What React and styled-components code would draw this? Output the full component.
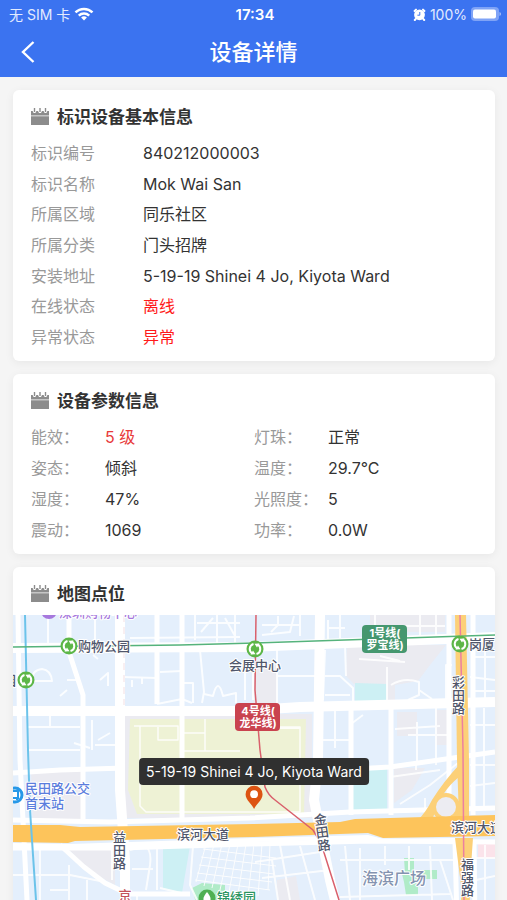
import styled, { createGlobalStyle } from "styled-components"

const GlobalStyle = createGlobalStyle`
  * {
    box-sizing: border-box;
  }

  body {
    margin: 0;
    background: #f5f5f5;
    color: #333;
    font-family: Inter, "Noto Sans CJK SC", sans-serif;
    font-size: 16px;
  }
`

const Page = styled.div`
  display: flex;
  flex-direction: column;
  height: 100vh;
`

const Header = styled.header`
  flex: none;
  background: #3b73f0;
  color: #fff;
`

const StatusBar = styled.div`
  display: grid;
  grid-template-columns: 1fr auto 1fr;
  align-items: center;
  height: 28px;
  padding: 0 6px 0 9px;
  font-size: 14px;
`

const StatusGroup = styled.div`
  display: flex;
  align-items: center;
  justify-content: ${(props) => props.$end ? "flex-end" : "flex-start"};
  gap: 4px;
  color: #e3ebff;
`

const Time = styled.span`
  font-size: 15px;
  font-weight: 600;
`

const NavBar = styled.div`
  display: grid;
  grid-template-columns: 56px 1fr 56px;
  align-items: center;
  height: 49px;
  padding-bottom: 2px;
`

const BackButton = styled.button`
  display: flex;
  align-items: center;
  justify-content: center;
  height: 44px;
  padding: 0;
  border: 0;
  background: none;
  color: #fff;
  cursor: pointer;
`

const PageTitle = styled.h1`
  margin: 0;
  font-size: 22px;
  line-height: 32px;
  font-weight: 500;
  text-align: center;
`

const Content = styled.main`
  flex: 1;
  min-height: 0;
  overflow-y: auto;
  scrollbar-width: none;
  display: flex;
  flex-direction: column;
  gap: 13px;
  padding: 13px 12px 13px 13px;
`

const Card = styled.section`
  flex: none;
  overflow: hidden;
  border-radius: 6px;
  background: #fff;
  box-shadow: 0 2px 10px rgba(0,0,0,0.06);
`

const CardTitle = styled.h2`
  display: flex;
  align-items: center;
  gap: 8px;
  height: 48px;
  margin: 0;
  padding: 12px 18px 6px;
  font-size: 17px;
  line-height: 30px;
  font-weight: 700;
`

const List = styled.dl`
  display: grid;
  grid-template-columns: repeat(${(props) => props.$columns}, 1fr);
  grid-auto-rows: 1fr;
  min-height: ${(props) => props.$height}px;
  margin: 0 18px 9px;
`

const Item = styled.div`
  display: flex;
  align-items: center;
  line-height: 24px;
`

const Label = styled.dt`
  flex: none;
  width: ${(props) => props.$width}px;
  color: #999;
`

const Value = styled.dd`
  margin: 0;
  color: ${(props) => props.$color || "#333"};
`

const MapBox = styled.div`
  position: relative;
  height: 388px;
  overflow: hidden;
`

const MapSvg = styled.svg`
  display: block;
  width: 100%;
  height: 100%;
`

const Marker = styled.div`
  position: absolute;
  left: 50%;
  bottom: 50%;
  transform: translateX(-50%);
  display: flex;
  flex-direction: column;
  align-items: center;
`

const Tooltip = styled.div`
  padding: 0 7px;
  border-radius: 4px;
  background: #303030;
  color: #fff;
  font-size: 14px;
  line-height: 27px;
  white-space: nowrap;
`

const MapText = styled.text`
  font-size: ${(props) => props.$size || 13}px;
  font-weight: ${(props) => props.$weight || 500};
  fill: ${(props) => props.$color || "#50566b"};
  stroke: ${(props) => props.$plain ? "none" : "#fff"};
  stroke-width: 2px;
  stroke-linejoin: round;
  paint-order: stroke;
  text-anchor: ${(props) => props.$anchor || "start"};
  writing-mode: ${(props) => props.$vertical ? "vertical-rl" : "horizontal-tb"};
`

const basicInfo = [
  {label:"标识编号", value:"840212000003"},
  {label:"标识名称", value:"Mok Wai San"},
  {label:"所属区域", value:"同乐社区"},
  {label:"所属分类", value:"门头招牌"},
  {label:"安装地址", value:"5-19-19 Shinei 4 Jo, Kiyota Ward"},
  {label:"在线状态", value:"离线", color:"#ff1a1a"},
  {label:"异常状态", value:"异常", color:"#ff1a1a"},
]

const params = [
  {label:"能效：", value:"5 级", color:"#e83a3a"},
  {label:"灯珠：", value:"正常"},
  {label:"姿态：", value:"倾斜"},
  {label:"温度：", value:"29.7°C"},
  {label:"湿度：", value:"47%"},
  {label:"光照度：", value:"5"},
  {label:"震动：", value:"1069"},
  {label:"功率：", value:"0.0W"},
]

const mainRoads = [
  "M13 648 L250 647 L495 637",
  "M13 711 L240 711 L300 707 L495 702",
  "M120 615 V790 L125 860 V1003",
  "M320 615 L318 760 L314 800 L330 880 L360 1003",
]

const sideRoads = [
  "M18 615 L20 760 L27 900 L34 1003",
  "M69 615 V652 L83 695 V822",
  "M182 615 V820",
  "M157 615 V704",
  "M351 708 V815",
  "M391 706 V815",
  "M13 773 L60 770 L125 768",
  "M13 820 L110 822 L250 818 L350 812 L495 808",
  "M13 848 L120 848 L250 844 L370 841 L495 842",
  "M60 845 L84 867 L105 883 L128 894 H190",
  "M318 771 L390 767 L495 752",
  "M449 615 V815",
  "M473 615 V815",
  "M455 842 L459 1003",
  "M474 842 L476 1003",
]

const minorRoads = [
  "M48 615 V647", "M95 615 V640", "M130 638 L240 637", "M195 615 V640", "M217 615 V643", "M235 615 V643",
  "M197 623 H240", "M201 632 L213 618 M225 618 L235 636",
  "M32 680 Q32 670 42 669 Q51 670 52 681 H30", "M67 680 L77 680", "M67 690 L60 696",
  "M93 655 L98 659", "M100 680 L108 673 V686", "M122 677 L157 678", "M132 680 V687 M142 678 V684",
  "M160 672 L182 671", "M182 683 H193 V703", "M200 650 L204 692 L202 703", "M204 694 L213 696 Q218 676 223 696 L236 693 V703",
  "M245 660 V700", "M157 704 L182 699 L192 703",
  "M262 625 H300 M271 632 L278 625 V616 M294 616 L290 632 L262 635", "M300 615 V636",
  "M328 620 V645 M340 615 V638 M328 628 H345", "M375 615 V632 M420 615 V640 M402 626 H445 M436 615 V640",
  "M277 645 V703", "M278 676 H340 L353 688 V703", "M325 650 L323 700 M325 695 H350", "M345 645 L346 676",
  "M359 659 L405 662 M380 656 L400 661", "M387 667 V704 M391 685 Q404 677 419 682 V695 L408 700 M419 690 L432 699",
  "M452 665 H446 V700", "M471 657 H495 M470 677 L495 680 M471 691 H495 M485 640 V700",
  "M27 750 H80 M95 745 H118 M92 720 V750 M98 740 L110 733 M74 743 L90 748",
  "M27 727 H80 M50 712 V727", "M253 673 V700",
  "M278 718 V728 H300 M335 710 V748 M320 740 H350 M363 715 L351 724 M395 729 L440 726 M417 722 V765 M436 708 V765 M408 735 H449",
  "M400 804 L430 785 L458 763 M390 777 L440 770 M416 770 V765 M425 798 V815",
  "M470 725 H495 M484 708 V808 M470 765 H495 M470 786 L495 783",
  "M40 848 V1003 M13 875 H70 L100 881 M69 865 V1003 M50 890 H69 M87 880 V900 M112 848 V880",
  "M130 850 L145 846 Q152 850 150 865 L146 890 M157 848 V890 M132 869 H153 M137 895 V920 M160 888 L190 895",
  "M193 846 L190 885 L197 900",
  "M280 845 L290 900 M262 878 L330 870 M255 862 L320 852 M272 860 L278 900 M300 846 L315 900 M345 846 L350 900",
  "M360 848 V905 M340 860 H460 M385 846 V865 M409 846 V870 M430 846 L432 900 M340 897 L450 894 M440 860 L453 900",
  "M476 858 H495 M476 880 L495 876 M485 845 V900",
]

const gridStreets = [
  "M206 844 L196 882", "M214 844 L204 886", "M222 844 L212 888", "M230 844 L220 890", "M238 844 L229 892",
  "M246 844 L238 894", "M254 844 L248 896", "M262 844 L258 896", "M270 844 L268 890",
  "M203 849 L276 858", "M201 857 L276 866", "M199 865 L274 874", "M197 873 L272 882", "M195 880 L270 890",
]

const WifiIcon = () => (
  <svg width="20" height="14" viewBox="0 0 20 14" fill="none" stroke="#fff" strokeWidth="2.5">
    <path d="M1.5 5.4C6.2 .8 13.8 .8 18.5 5.4" />
    <path d="M4.8 8.6c3-2.8 7.4-2.8 10.4 0" />
    <path d="M10 13.4 7.1 10.5q2.9-2.3 5.8 0z" fill="#fff" stroke="none" />
  </svg>
)

const AlarmIcon = () => (
  <svg width="13" height="13" viewBox="0 0 13 13">
    <circle cx="6.5" cy="6.8" r="5.4" fill="#fff" />
    <path d="M1.6 3 3 1.6M11.4 3 10 1.6M2.8 10.8 1.8 12M10.2 10.8l1 1.2" stroke="#fff" strokeWidth="2" strokeLinecap="round" />
    <path d="M6.8 4v3.2H4.4" fill="none" stroke="#3b73f0" strokeWidth="1" />
  </svg>
)

const BatteryIcon = () => (
  <svg width="30" height="14" viewBox="0 0 30 14">
    <rect x="0" y="0" width="28" height="14" rx="4" fill="#7fa3f6" />
    <rect x="2" y="2.5" width="23" height="9" rx="2" fill="#fff" />
    <path d="M28.5 5v4q1.5-.5 1.5-2t-1.5-2z" fill="#a9c1fa" />
  </svg>
)

const CalendarIcon = () => (
  <svg width="18" height="20" viewBox="0 0 18 20" fill="#8c8c8c">
    <path d="M0 4h1.6l1 2h1.8l1-2H7l1 2h2l1-2h1.600l1 2h1.800l1-2H18v4.500H0z" />
    <path d="M2.800 1h1.400v4H2.800zM8.300 1h1.400v4H8.300zM13.800 1h1.400v4h-1.400z" />
    <path d="M0 9.300h18V18H0z" />
  </svg>
)

const PinIcon = () => (
  <svg width="18" height="24" viewBox="0 0 18 24">
    <path d="M9 24C7.500 19.500.5 15.500.5 9.200a8.500 8.500 0 0 1 17 0C17.500 15.500 10.500 19.500 9 24z" fill="#dd5412" />
    <circle cx="9" cy="9.200" r="3.900" fill="#fff" />
  </svg>
)

const Station = ({x, y}) => (
  <g transform={`translate(${x} ${y})`}>
    <circle r="8.500" fill="#5cb647" />
    <g fill="none" stroke="#fff" strokeWidth="2">
      <path d="M-1.500 -5A5.200 5.200 0 0 0 -2.500 4.600" />
      <path d="M1.500 5A5.200 5.200 0 0 0 2.500 -4.600" />
    </g>
    <path d="M-4.500 5.500L.5 5.200-2 1.500zM4.500-5.500L-.5-5.200 2-1.500z" fill="#fff" />
  </g>
)

const LineBadge = ({x, y, color, lines}) => (
  <g>
    <rect x={x} y={y} width="45" height="28" rx="4" fill={color} />
    <MapText $size={11} $weight={700} $color="#fff" $anchor="middle" $plain>
      {lines.map((line, i) => (
        <tspan key={line} x={x + 23} y={y + 12 + i * 12}>{line}</tspan>
      ))}
    </MapText>
  </g>
)

const CityMap = () => (
  <MapSvg viewBox="13 615 482 388" preserveAspectRatio="xMidYMid slice" role="img" aria-label="地图">
    <rect x="-400" y="600" width="1400" height="500" fill="#e4effc" />

    <g fill="#ebebf1">
      <path d="M31 771H82V822H33z" />
      <path d="M347 645H446L430 665 418 681 395 685V700H386V684H354L346 676z" />
      <path d="M253 665H277V704H253z" />
      <path d="M397 712H417V736H397zM436 710H449V745H436z" />
      <path d="M394 768H425L412 790 394 803z" />
      <path d="M125 714H312V818H125z" />
      <path d="M65 846H115V885L93 873z" />
      <path d="M370 615H445V632H370z" />
      <path d="M277 880L296 876 300 900H277z" />
    </g>
    <path d="M130 719H306L304 814H137L128 790z" fill="#eef2d5" />
    <path d="M355 683L387 684V701H355zM350 769H387V813H350zM163 847L190 846 182 893 163 889z" fill="#cdf0f4" />
    <path d="M478 843H495V858H478z" fill="#fbe3ea" />
    <path d="M192 888L202 883 225 885V903H196zM404 858H414V870H437V879H418V895H406L404 882 402 874H405z" fill="#b0ebc8" />

    <g fill="none" stroke="#fff" strokeLinejoin="round">
      <g strokeWidth="1" opacity=".9">
        {gridStreets.map((d) => <path key={d} d={d} />)}
      </g>
      <g strokeWidth="2" opacity=".85">
        {minorRoads.map((d) => <path key={d} d={d} />)}
        <path d="M134 726H178V740H158V727M182 733H205V719M205 733V751H240M140 726V806L146 812H300V727H268M182 751H205" strokeWidth="1.500" />
      </g>
      <g strokeWidth="5">
        {sideRoads.map((d) => <path key={d} d={d} />)}
      </g>
      <g strokeWidth="10">
        {mainRoads.map((d) => <path key={d} d={d} />)}
      </g>
    </g>
    <path d="M124 615V705" stroke="#f3dfe3" strokeWidth="1" strokeDasharray="7 5" />

    <g fill="#fcd078">
      <path d="M455 615H466L469 760V818H459L457 760z" />
      <path d="M455 838H473L470 880 469 1003H462L461 885z" />
      <path d="M418 820Q426 812 432 800 444 781 459 765V777Q440 792 433 818L459 811V820z" />
    </g>
    <circle cx="446" cy="807" r="12" fill="#ececf2" stroke="#fcd078" strokeWidth="4" />
    <path d="M13 825L60 825 80 827 253 824 340 822 355 819 495 815V836L383 838 368 833 253 837 75 841 68 843 13 842z" fill="#fdc45b" />
    <path d="M13 845L70 846 253 840 368 837 383 841 455 840" fill="none" stroke="#fff" strokeWidth="4" />

    <g fill="none">
      <path d="M25 615L28 750 30 810 36 900 43 1003" stroke="#6cc3ea" strokeWidth="2" />
      <path d="M13 647L180 645 255 643 495 635" stroke="#55b37c" strokeWidth="1.500" />
      <path d="M256 615L255 690 260 750 265 787Q268 795 275 800L313 830 321 843 339 900 372 1003" stroke="#d9606c" strokeWidth="1.500" />
      <path d="M460 615L463 750 464 900V1003" stroke="#ec7fa0" strokeWidth="1.500" />
    </g>

    <circle cx="49" cy="611" r="8" fill="#a678dd" />
    <MapText x="59" y="617" $color="#a678dd">深圳购物中心</MapText>

    <Station x={69} y={646} />
    <Station x={26} y={680} />
    <Station x={255} y={649} />
    <Station x={460} y={644} />
    <MapText x="78" y="651">购物公园</MapText>
    <MapText x="16" y="685" $anchor="end">园</MapText>
    <MapText x="255" y="670" $anchor="middle">会展中心</MapText>
    <MapText x="469" y="649">岗厦</MapText>
    <LineBadge x={362} y={625} color="#45976f" lines={["1号线(", "罗宝线)"]} />
    <LineBadge x={235} y={703} color="#c9434f" lines={["4号线(", "龙华线)"]} />

    <MapText x="458" y="676" $vertical>彩田路</MapText>
    <MapText x="119" y="831" $vertical>益田路</MapText>
    <MapText x="319" y="813" transform="rotate(-8 319 813)" $vertical>金田路</MapText>
    <MapText x="467" y="858" $vertical>福强路</MapText>
    <MapText x="177" y="839">滨河大道</MapText>
    <MapText x="451" y="832">滨河大道</MapText>
    <MapText x="125" y="900" $color="#c4525a" $anchor="middle">京</MapText>
    <MapText x="362" y="884" $size={16} $color="#8493b0">海滨广场</MapText>

    <circle cx="15" cy="795" r="7" fill="#fff" stroke="#2698e8" strokeWidth="3" />
    <path d="M11 791H18V798H11zM12 798v2M17 798v2" fill="none" stroke="#2698e8" strokeWidth="2" />
    <MapText $color="#5b7ddd">
      <tspan x="25" y="793">民田路公交</tspan>
      <tspan x="25" y="808">首末站</tspan>
    </MapText>

    <circle cx="207" cy="898" r="8.500" fill="#4fb052" />
    <path d="M207 892Q202 898 204 901L207 903 210 901Q212 898 207 892z" fill="#fff" />
    <MapText x="217" y="902" $color="#2c9560">锦绣园</MapText>
  </MapSvg>
)

const InfoList = ({items, columns, height, labelWidth}) => (
  <List $columns={columns} $height={height}>
    {items.map(item => (
      <Item key={item.label}>
        <Label $width={labelWidth}>{item.label}</Label>
        <Value $color={item.color}>{item.value}</Value>
      </Item>
    ))}
  </List>
)

const App = () => {
    return(
        <Page>
          <GlobalStyle />
          <Header>
            <StatusBar>
              <StatusGroup>
                <span>无 SIM 卡</span>
                <WifiIcon />
              </StatusGroup>
              <Time>17:34</Time>
              <StatusGroup $end>
                <AlarmIcon />
                <span>100%</span>
                <BatteryIcon />
              </StatusGroup>
            </StatusBar>
            <NavBar>
              <BackButton type="button" aria-label="返回">
                <svg width="14" height="22" viewBox="0 0 14 22" fill="none" stroke="currentColor" strokeWidth="2.400">
                  <path d="M12.500 1 2 11l10.500 10" />
                </svg>
              </BackButton>
              <PageTitle>设备详情</PageTitle>
            </NavBar>
          </Header>

          <Content>
            <Card>
              <CardTitle><CalendarIcon />标识设备基本信息</CardTitle>
              <InfoList items={basicInfo} columns={1} height={214} labelWidth={112} />
            </Card>
            <Card>
              <CardTitle><CalendarIcon />设备参数信息</CardTitle>
              <InfoList items={params} columns={2} height={123} labelWidth={74} />
            </Card>
            <Card>
              <CardTitle><CalendarIcon />地图点位</CardTitle>
              <MapBox>
                <CityMap />
                <Marker>
                  <Tooltip>5-19-19 Shinei 4 Jo, Kiyota Ward</Tooltip>
                  <PinIcon />
                </Marker>
              </MapBox>
            </Card>
          </Content>
        </Page>
    )
}

export default App
